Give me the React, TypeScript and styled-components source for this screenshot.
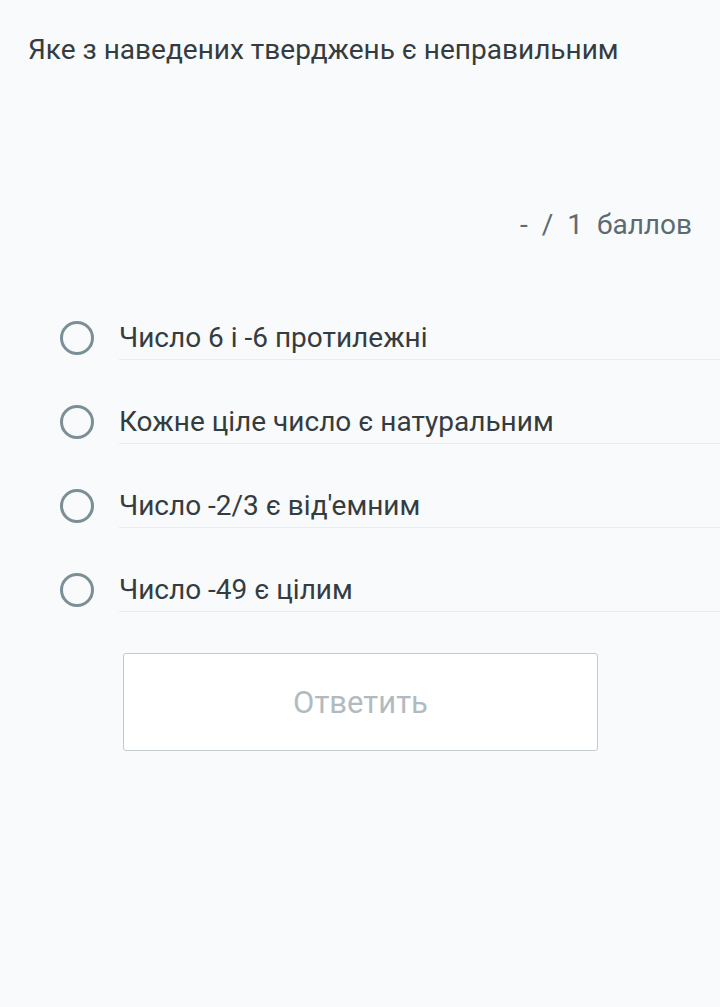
import React, { FC } from 'react';
import styled, { createGlobalStyle } from 'styled-components';

const GlobalStyle = createGlobalStyle`
    html, body {
        margin: 0;
        padding: 0;
        background: #f8fafc;
    }
    body {
        font-family: Roboto, "Noto Sans", sans-serif;
        color: #353c3f;
    }
`;

const Page = styled.div`
    min-height: 1007px;
    padding: 34px 0 0 28px;
    box-sizing: border-box;
`;

const Question = styled.div`
    font-size: 28px;
    line-height: 32px;
`;

const Score = styled.div`
    margin-top: 143px;
    padding-right: 28px;
    text-align: right;
    font-size: 28px;
    line-height: 32px;
    color: #5d6b71;
    word-spacing: 7px;
`;

const Options = styled.div`
    margin-top: 78px;
    display: flex;
    flex-direction: column;
`;

const Option = styled.label`
    display: flex;
    align-items: stretch;
    height: 84px;
    cursor: pointer;
`;

const Radio = styled.span`
    flex: none;
    width: 28px;
    height: 28px;
    margin: 2px 25px 0 32px;
    border: 3.5px solid #7a8f96;
    border-radius: 50%;
`;

const OptionText = styled.span`
    flex: 1;
    height: 41px;
    font-size: 28px;
    line-height: 37px;
    border-bottom: 1px solid #e9edef;
    box-sizing: border-box;
`;

const SubmitButton = styled.button`
    margin: -2px 0 0 95px;
    width: 475px;
    height: 98px;
    background: #ffffff;
    border: 1px solid #c3cacd;
    border-radius: 3px;
    font-family: Roboto, "Noto Sans", sans-serif;
    font-size: 31px;
    color: #b1bbbf;
    cursor: default;
`;

const options = [
    'Число 6 і -6 протилежні',
    'Кожне ціле число є натуральним',
    "Число -2/3 є від'емним",
    'Число -49 є цілим',
];

const App: FC = () => (
    <>
        <GlobalStyle />
        <Page>
            <Question>Яке з наведених тверджень є неправильним</Question>
            <Score>- / 1 баллов</Score>
            <Options>
                {options.map((text) => (
                    <Option key={text}>
                        <Radio />
                        <OptionText>{text}</OptionText>
                    </Option>
                ))}
            </Options>
            <SubmitButton disabled>Ответить</SubmitButton>
        </Page>
    </>
);

export default App;
